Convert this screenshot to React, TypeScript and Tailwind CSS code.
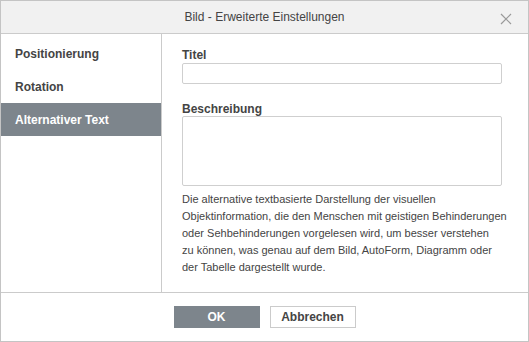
import React from 'react';

const sideItems = ['Positionierung', 'Rotation', 'Alternativer Text'];

const descLines = [
  'Die alternative textbasierte Darstellung der visuellen',
  'Objektinformation, die den Menschen mit geistigen Behinderungen',
  'oder Sehbehinderungen vorgelesen wird, um besser verstehen',
  'zu können, was genau auf dem Bild, AutoForm, Diagramm oder',
  'der Tabelle dargestellt wurde.',
];

export default function App() {
  const active = 2;
  return (
    <div
      className="w-[529px] h-[342px] flex flex-col bg-white border border-[#c4c4c4] text-[#444]"
      style={{ fontFamily: '"Liberation Sans", Arial, sans-serif' }}
    >
      {/* Title bar */}
      <div className="relative h-[33px] shrink-0 flex items-center justify-center bg-[#f1f1f1] border-b border-[#cbcbcb]">
        <span className="text-[12px] text-[#444]">Bild - Erweiterte Einstellungen</span>
        <svg className="absolute right-[16px] top-[12px]" width="12" height="12" viewBox="0 0 12 12">
          <path d="M1 1L11 11M11 1L1 11" stroke="#9a9a9a" strokeWidth="1.2" fill="none" />
        </svg>
      </div>

      {/* Body */}
      <div className="flex h-[258px] shrink-0">
        {/* Sidebar */}
        <div className="w-[161px] shrink-0 border-r border-[#cbcbcb] pt-[3px]">
          {sideItems.map((label, i) => (
            <div
              key={label}
              className={
                i === active
                  ? 'h-[33px] flex items-center pl-[14px] text-[12px] font-bold bg-[#7d858c] text-white'
                  : 'h-[33px] flex items-center pl-[14px] text-[12px] font-bold text-[#444]'
              }
            >
              {label}
            </div>
          ))}
        </div>

        {/* Content */}
        <div className="flex-1 pl-[20px] pt-[14px]">
          <div className="text-[12px] font-bold leading-[15px]">Titel</div>
          <div className="w-[320px] h-[21px] border border-[#cfcfcf] rounded-[2px]" />
          <div className="mt-[18px] text-[12px] font-bold leading-[14px]">Beschreibung</div>
          <div className="w-[320px] h-[70px] border border-[#cfcfcf] rounded-[2px]" />
          <div className="mt-[5px] text-[11px] leading-[17px] text-[#444]">
            {descLines.map((l) => (
              <div key={l}>{l}</div>
            ))}
          </div>
        </div>
      </div>

      {/* Footer */}
      <div className="flex-1 border-t border-[#cbcbcb] flex items-center justify-center gap-[10px]">
        <button className="w-[86px] h-[22px] bg-[#7d858c] text-white text-[12px] font-bold">OK</button>
        <button className="w-[86px] h-[22px] bg-white border border-[#cbcbcb] text-[#444] text-[12px] font-bold">
          Abbrechen
        </button>
      </div>
    </div>
  );
}
